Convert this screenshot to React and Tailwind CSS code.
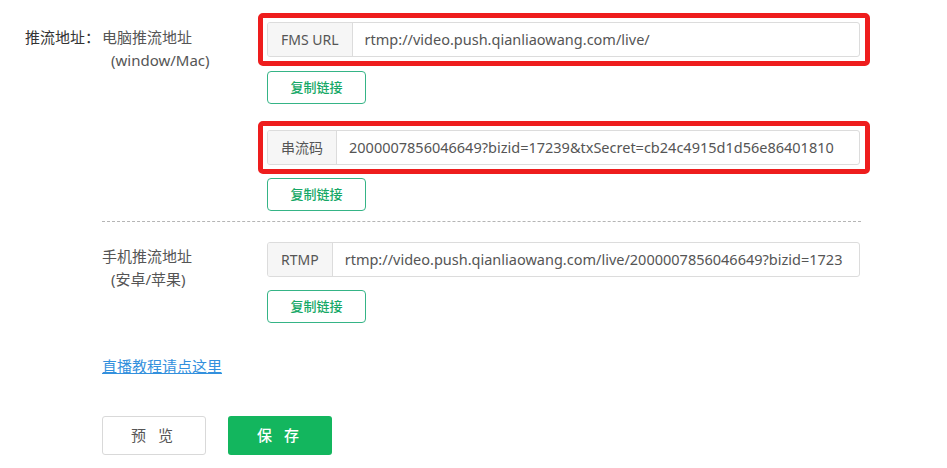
import React from "react";

const font = { fontFamily: '"Noto Sans", "Noto Sans CJK SC", sans-serif' };

const AddonInput = ({ addon, value }) => (
  <div className="flex h-[35px] w-[593px] rounded-[3px] border border-[#dcdcdc] bg-white overflow-hidden">
    <div className="flex items-center px-[13px] bg-[#f6f6f6] border-r border-[#dcdcdc] text-[14px] text-[#555] whitespace-nowrap">
      {addon}
    </div>
    <div className="flex items-center pl-[12px] pr-[8px] text-[14.5px] text-[#555] whitespace-nowrap overflow-hidden">
      {value}
    </div>
  </div>
);

const CopyButton = ({ className = "" }) => (
  <button
    className={`h-[33px] w-[99px] rounded-[4px] border border-[#35b486] bg-white text-[13px] font-medium text-[#16a866] ${className}`}
  >
    复制链接
  </button>
);

const RedBox = ({ children, className = "" }) => (
  <div className={`w-[612px] rounded-[5px] border-[5px] border-[#ee1d1d] p-[4px] ${className}`}>
    {children}
  </div>
);

const SubLabel = ({ first, second, className = "" }) => (
  <div className={`w-[156px] shrink-0 text-[15px] leading-[23px] text-[#555] ${className}`}>
    <div>{first}</div>
    <div className="pl-[9px]">{second}</div>
  </div>
);

export default function App() {
  return (
    <div className="min-h-screen bg-white pl-[25px] pt-[13px]" style={font}>
      <div className="flex items-start">
        <div className="w-[77px] shrink-0 pt-[13px] text-[15px] leading-[23px] text-[#333] whitespace-nowrap">
          推流地址：
        </div>
        <div className="flex flex-col">
          {/* PC push */}
          <div className="flex items-start">
            <SubLabel first="电脑推流地址" second="(window/Mac)" className="pt-[13px]" />
            <div className="flex flex-col">
              <RedBox>
                <AddonInput addon="FMS URL" value="rtmp://video.push.qianliaowang.com/live/" />
              </RedBox>
              <div className="pl-[9px] mt-[5px]">
                <CopyButton />
              </div>
              <RedBox className="mt-[17px]">
                <AddonInput
                  addon="串流码"
                  value="2000007856046649?bizid=17239&txSecret=cb24c4915d1d56e86401810"
                />
              </RedBox>
              <div className="pl-[9px] mt-[4px]">
                <CopyButton />
              </div>
            </div>
          </div>

          <div className="mt-[10px] w-[759px] border-t border-dashed border-[#b5b5b5]" />

          {/* mobile push */}
          <div className="flex items-start mt-[20px]">
            <SubLabel first="手机推流地址" second="(安卓/苹果)" className="pt-[3px]" />
            <div className="flex flex-col pl-[9px]">
              <AddonInput
                addon="RTMP"
                value="rtmp://video.push.qianliaowang.com/live/2000007856046649?bizid=1723"
              />
              <CopyButton className="mt-[13px]" />
            </div>
          </div>

          <a
            href="#"
            className="mt-[32px] w-fit text-[15px] leading-[22px] text-[#3390dd] underline underline-offset-1"
          >
            直播教程请点这里
          </a>

          <div className="mt-[39px] flex gap-[22px]">
            <button className="h-[39px] w-[104px] rounded-[3px] border border-[#d9d9d9] bg-white text-[15px] text-[#555] tracking-[4px]">
              预 览
            </button>
            <button className="h-[39px] w-[104px] rounded-[3px] bg-[#13b65e] text-[15px] font-medium text-white tracking-[4px]">
              保 存
            </button>
          </div>
        </div>
      </div>
    </div>
  );
}
